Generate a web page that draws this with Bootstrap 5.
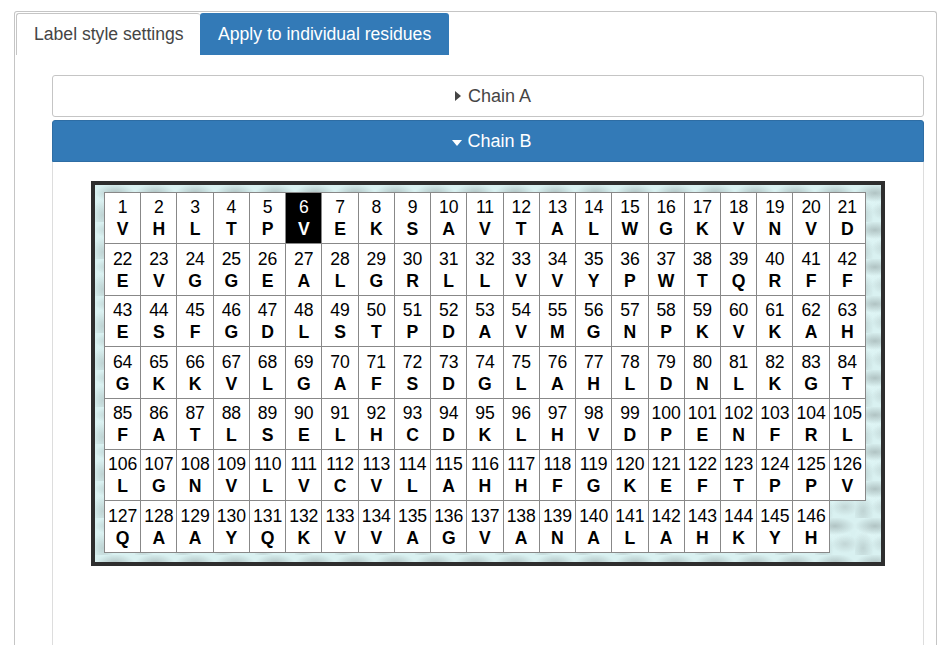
<!DOCTYPE html>
<html lang="en"><head><meta charset="utf-8"><title>Residues</title>
<link href="https://cdn.jsdelivr.net/npm/bootstrap@5.3.0/dist/css/bootstrap.min.css" rel="stylesheet">
<style>
html,body{height:646px;overflow:hidden;background:#fff;font-family:"Liberation Sans",Arial,sans-serif;color:#333}
.shell{margin:11px 7px 0 14px;height:634px;border:1px solid #c5c5c5;border-bottom:0;border-radius:3px 3px 0 0;padding:1px 1px 0 1px;overflow:hidden}
.tabbar{height:42px;border:0;flex-wrap:nowrap}
.tabbar .nav-link{height:42px;padding:0 18px;font-size:17.6px;line-height:42px;border:0;border-radius:3px 3px 0 0;color:#454545;white-space:nowrap}
.tabbar .tab-off{background:#fff;border:1px solid #c5c5c5;border-bottom:0;border-right:0;line-height:40px;padding:0 17px;width:184px;color:#454545}
.tabbar .tab-on{background:#337ab7;color:#fff;width:249px}
.accwrap{margin:20px 11px 0 36px}
.acchead{height:42px;font-size:18px;line-height:40px;text-align:center;border:1px solid #c5c5c5;border-radius:3px;background:#fff;color:#454545;margin-bottom:3px;padding:0 0 0 10px}
.acchead.opened{background:#337ab7;border-color:#2e6da4;color:#fff;border-radius:3px 3px 0 0;margin-bottom:0;padding-left:8px}
.tri{display:inline-block;vertical-align:1px}
.tri-side{margin-right:7px}
.tri-down{margin-right:5px}
.accbody{border:1px solid #ddd;border-top:0;height:520px;padding:19px 0 0 38px}
.frame{width:794px;height:385px;border:4px solid #2e2e2e;padding:7px 0 0 9px;
 background-color:#d9f1f1;
 background-image:
  radial-gradient(ellipse 20px 9px at 20px 8px,rgba(150,165,165,.6),transparent),
  radial-gradient(ellipse 11px 16px at 8px 30px,rgba(150,165,165,.4),transparent),
  radial-gradient(ellipse 14px 9px at 30px 26px,rgba(165,180,180,.45),transparent),
  radial-gradient(ellipse 22px 10px at 16px 17px,rgba(230,250,250,.4),transparent);
 background-size:40px 37px}
.seqtable{table-layout:fixed;width:761px;height:360px;border-collapse:collapse;background:transparent;margin:0}
.seqtable td{border:1px solid #888;width:36.24px;height:51.4px;padding:0;text-align:center;vertical-align:top;font-size:17.6px;line-height:22px;color:#000;background:#fff}
.seqtable td b{display:block;font-weight:700;font-size:17.6px;line-height:21px;margin-top:1px}
.seqtable td span{display:block;padding-top:3.4px;letter-spacing:-.1px}
.seqtable td.picked{background:#000;color:#fff}
.seqtable td.blank{border:0;background:transparent}
</style></head><body>
<div class="shell">
 <ul class="nav tabbar">
  <li class="nav-item"><a class="nav-link tab-off" href="#">Label style settings</a></li>
  <li class="nav-item"><a class="nav-link tab-on" href="#">Apply to individual residues</a></li>
 </ul>
 <div class="accwrap">
  <div class="acchead"><svg class="tri tri-side" width="6" height="10" viewBox="0 0 6 10"><path d="M0 0L6 5L0 10Z" fill="#454545"/></svg>Chain A</div>
  <div class="acchead opened"><svg class="tri tri-down" width="10" height="6" viewBox="0 0 10 6"><path d="M0 0H10L5 6Z" fill="#fff"/></svg>Chain B</div>
  <div class="accbody">
   <div class="frame"><table class="seqtable"><tbody id="t"></tbody></table></div>
  </div>
 </div>
</div>
<script>
var s="VHLTPVEKSAVTALWGKVNVDEVGGEALGRLLVVYPWTQRFFESFGDLSTPDAVMGNPKVKAHGKKVLGAFSDGLAHLDNLKGTFATLSELHCDKLHVDPENFRLLGNVLVCVLAHHFGKEFTPPVQAAYQKVVAGVANALAHKYH";
var h="";
for(var r=0;r<7;r++){h+="<tr>";for(var c=0;c<21;c++){var i=r*21+c;
 if(i<s.length){h+='<td'+(i==5?' class="picked"':'')+'><span>'+(i+1)+'</span><b>'+s[i]+'</b></td>';}
 else h+='<td class="blank"></td>';}
 h+="</tr>";}
document.getElementById("t").innerHTML=h;
</script>
<script src="https://cdn.jsdelivr.net/npm/bootstrap@5.3.0/dist/js/bootstrap.bundle.min.js"></script>
</body></html>
